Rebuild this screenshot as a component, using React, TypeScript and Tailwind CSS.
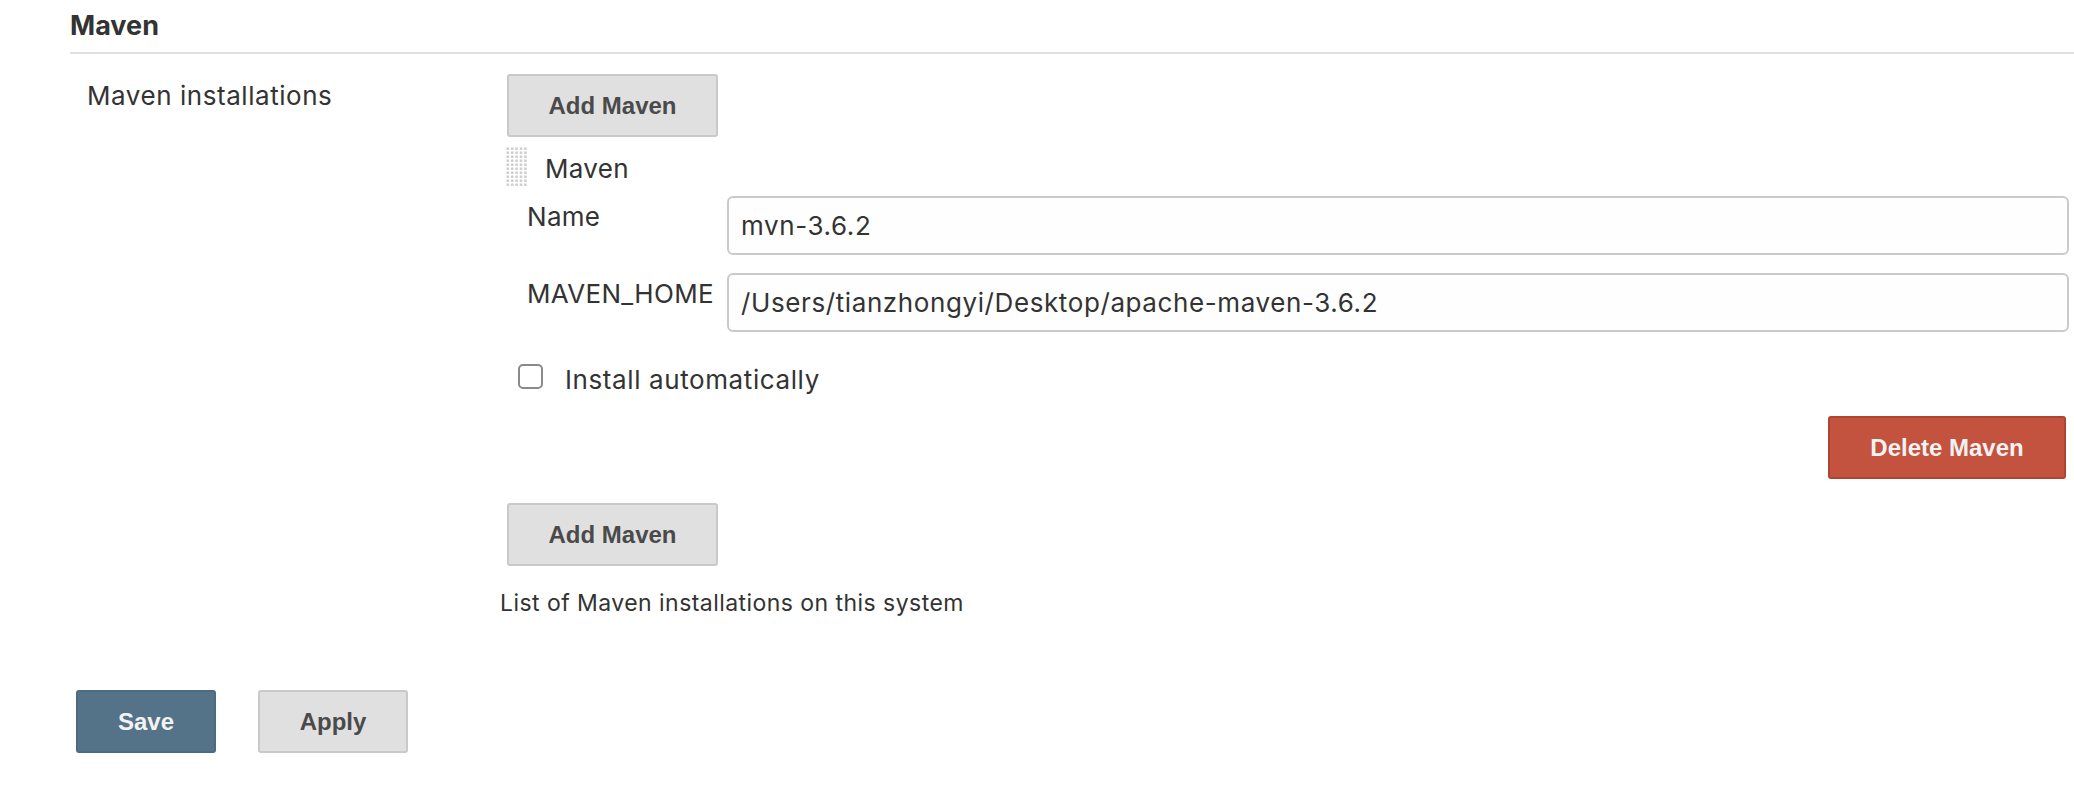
import React from "react";

const sans = { fontFamily: "Inter, 'Noto Sans', sans-serif" };
const btnFont = { fontFamily: "'Liberation Sans', Arial, sans-serif" };

function Grip() {
  const dots = [];
  for (let r = 0; r < 10; r++) {
    for (let c = 0; c < 5; c++) {
      dots.push(<rect key={`${r}-${c}`} x={c * 4.4 + 0.5} y={r * 4 + 0.5} width="2.6" height="2.4" fill="#cdcdcd" />);
    }
  }
  return (
    <svg width="22" height="40" viewBox="0 0 22 40" className="shrink-0">
      {dots}
    </svg>
  );
}

function GrayButton({ children, className = "" }: { children: React.ReactNode; className?: string }) {
  return (
    <button
      style={btnFont}
      className={`h-[63px] rounded-[3px] border-2 border-[#c9c9c9] bg-[#e0e0e0] text-[24px] font-bold text-[#4a4a4a] ${className}`}
    >
      {children}
    </button>
  );
}

function Field({ label, value, className = "" }: { label: string; value: string; className?: string }) {
  return (
    <div className={`flex ${className}`}>
      <div className="ml-[27px] w-[200px] shrink-0 pt-[5px] text-[26px] leading-[32px] tracking-[0.3px] text-[#333]">{label}</div>
      <div className="flex h-[59px] flex-1 items-center rounded-[6px] border-2 border-[#cacaca] bg-[#fefefe] pl-[12px] text-[26px] tracking-[0.6px] text-[#333]">
        {value}
      </div>
    </div>
  );
}

export default function App() {
  return (
    <div style={sans} className="min-h-[786px] w-[2074px] bg-white text-[#333]">
      <div className="pl-[70px]">
        <div className="border-b-2 border-[#e0e0e0] pt-[10px] pb-[10px] text-[27px] font-bold leading-[32px]">Maven</div>

        <div className="mt-[20px] flex">
          <div className="w-[430px] shrink-0 pl-[17px] pt-[6px] text-[26px] leading-[32px] tracking-[0.55px]">Maven installations</div>

          <div className="flex flex-1 flex-col pr-[5px]">
            <GrayButton className="ml-[7px] w-[211px]">Add Maven</GrayButton>

            <div className="ml-[6px] mt-[10px] flex h-[40px] items-start gap-[17px]">
              <Grip />
              <span className="mt-[6px] text-[26px] leading-[32px] tracking-[0.3px]">Maven</span>
            </div>

            <Field className="mt-[9px]" label="Name" value="mvn-3.6.2" />
            <Field className="mt-[18px]" label="MAVEN_HOME" value="/Users/tianzhongyi/Desktop/apache-maven-3.6.2" />

            <div className="ml-[18px] mt-[32px] flex items-start">
              <span className="h-[25px] w-[25px] rounded-[5px] border-2 border-[#8a8a8a] bg-white" />
              <span className="ml-[22px] text-[26px] leading-[32px] tracking-[0.6px]">Install automatically</span>
            </div>

            <div className="mt-[20px] flex justify-end">
              <button
                style={btnFont}
                className="mr-[3px] h-[63px] w-[238px] rounded-[3px] border-2 border-[#b04432] bg-[#c3533f] text-[24px] font-bold text-[#f2f2f2]"
              >
                Delete Maven
              </button>
            </div>

            <GrayButton className="ml-[7px] mt-[24px] w-[211px]">Add Maven</GrayButton>

            <div className="mt-[23px] text-[23px] leading-[28px] tracking-[0.45px]">List of Maven installations on this system</div>
          </div>
        </div>

        <div className="ml-[6px] mt-[73px] flex gap-[42px]">
          <button
            style={btnFont}
            className="h-[63px] w-[140px] rounded-[3px] border-2 border-[#4b6b80] bg-[#547388] text-[24px] font-bold text-[#f2f2f2]"
          >
            Save
          </button>
          <GrayButton className="w-[150px]">Apply</GrayButton>
        </div>
      </div>
    </div>
  );
}
